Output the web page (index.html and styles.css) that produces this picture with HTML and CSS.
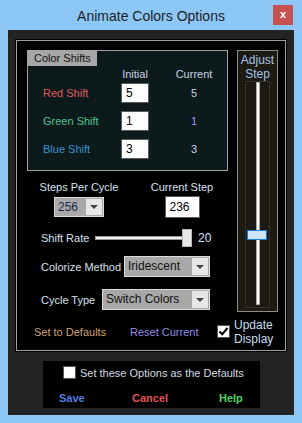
FILE: index.html
```html
<!DOCTYPE html>
<html lang="en">
<head>
    <meta charset="UTF-8">
    <meta name="viewport" content="width=device-width, initial-scale=1.0">
    <title>Animate Colors Options</title>
    <link rel="stylesheet" href="styles.css">
</head>
<body>
    <div class="window">
        <div class="titlebar">
            <span></span>
            <span class="title">Animate Colors Options</span>
            <span class="close">x</span>
        </div>
        <div class="client">
            <div class="main">
                <div class="main-inner">
                    <div class="top">
                        <div class="left">
                            <div class="shifts">
                                <div class="shifts-label">Color Shifts</div>
                                <div class="shifts-grid">
                                    <span></span>
                                    <span class="hdr">Initial</span>
                                    <span class="hdr">Current</span>

                                    <span class="name red">Red Shift</span>
                                    <span class="num-input">5</span>
                                    <span class="cur">5</span>

                                    <span class="name green">Green Shift</span>
                                    <span class="num-input">1</span>
                                    <span class="cur purple">1</span>

                                    <span class="name blue">Blue Shift</span>
                                    <span class="num-input">3</span>
                                    <span class="cur">3</span>
                                </div>
                            </div>

                            <div class="steps">
                                <div class="steps-col col-a">
                                    <div class="lbl">Steps Per Cycle</div>
                                    <div class="select select-steps">
                                        <span class="select-text">256</span>
                                        <span class="select-btn"><span class="arrow"></span></span>
                                    </div>
                                </div>
                                <div class="steps-col col-b">
                                    <div class="lbl">Current Step</div>
                                    <div class="step-input">236</div>
                                </div>
                            </div>

                            <div class="row rate-row">
                                <span class="lbl rate-lbl">Shift Rate</span>
                                <div class="hslider">
                                    <div class="htrack"></div>
                                    <div class="hthumb"></div>
                                </div>
                                <span class="rate-val">20</span>
                            </div>

                            <div class="row method-row">
                                <span class="lbl method-lbl">Colorize Method</span>
                                <div class="select select-method">
                                    <span class="select-text">Iridescent</span>
                                    <span class="select-btn"><span class="arrow"></span></span>
                                </div>
                            </div>

                            <div class="row cycle-row">
                                <span class="lbl cycle-lbl">Cycle Type</span>
                                <div class="select select-cycle">
                                    <span class="select-text">Switch Colors</span>
                                    <span class="select-btn"><span class="arrow"></span></span>
                                </div>
                            </div>
                        </div>

                        <div class="adjust">
                            <div class="adjust-title">Adjust<br>Step</div>
                            <div class="vframe">
                                <div class="vtrack"></div>
                                <div class="vthumb"></div>
                            </div>
                        </div>
                    </div>

                    <div class="actions">
                        <span class="link defaults">Set to Defaults</span>
                        <span class="link reset">Reset Current</span>
                        <span class="check checked">
                            <svg width="11" height="11" viewBox="0 0 11 11"><path d="M1.5 5.5 L4.2 8.3 L9.5 2" fill="none" stroke="#000" stroke-width="2"/></svg>
                        </span>
                        <span class="update">Update<br>Display</span>
                    </div>
                </div>
            </div>

            <div class="footer-box">
                <div class="default-row">
                    <span class="check"></span>
                    <span class="default-text">Set these Options as the Defaults</span>
                </div>
                <div class="buttons">
                    <span class="btn save">Save</span>
                    <span class="btn cancel">Cancel</span>
                    <span class="btn help">Help</span>
                </div>
            </div>
        </div>
    </div>
</body>
</html>
```

FILE: styles.css
```css
body {
    margin: 0;
    padding: 0;
    font-family: "Liberation Sans", Arial, sans-serif;
    font-size: 11px;
    background-color: #8cc7f6;
}
.window {
    width: 302px;
    height: 423px;
    background-color: #8cc7f6;
    overflow: hidden;
}
.titlebar {
    height: 30px;
    display: grid;
    grid-template-columns: 1fr auto 1fr;
    align-items: center;
}
.title {
    font-size: 14px;
    color: #1e1e1e;
    padding-top: 1px;
}
.close {
    justify-self: end;
    margin-right: 9px;
    width: 20px;
    height: 20px;
    background-color: #c75050;
    color: white;
    font-weight: bold;
    font-size: 11px;
    line-height: 18px;
    text-align: center;
}
.client {
    margin: 0 8px;
    height: 385px;
    background-color: #232323;
    padding: 9px 0 0 7px;
    box-sizing: border-box;
}
.main {
    width: 272px;
    height: 313px;
    background-color: #000;
    padding: 1px;
    box-sizing: border-box;
}
.main-inner {
    height: 100%;
    border: 1px solid #a0a0a0;
    box-sizing: border-box;
}
.top {
    display: flex;
    padding: 9px 0 0 10px;
    gap: 9px;
}
.left {
    width: 201px;
}

/* color shifts panel */
.shifts {
    height: 121px;
    box-sizing: border-box;
    border: 1px solid #a0a0a0;
    background-color: #0c1a1c;
}
.shifts-label {
    margin: -1px 0 0 -1px;
    width: 70px;
    height: 16px;
    line-height: 16px;
    box-sizing: border-box;
    padding-left: 7px;
    background-color: #a6a6a6;
    color: #111;
}
.shifts-grid {
    display: grid;
    grid-template-columns: 63px 28px 60px;
    grid-template-rows: 16px 28px 28px 28px;
    column-gap: 15px;
    padding-left: 15px;
}
.hdr {
    line-height: 16px;
    text-align: center;
    color: #c8d4e4;
}
.name, .cur {
    margin-top: 1px;
    height: 20px;
    line-height: 20px;
}
.cur {
    text-align: center;
    color: #c8d4ee;
}
.red { color: #e05c5c; }
.green { color: #52c48e; }
.blue { color: #3a95d2; }
.purple { color: #a898e8; }
.num-input {
    margin-top: 1px;
    height: 20px;
    line-height: 18px;
    box-sizing: border-box;
    border: 1px solid #5a5a5a;
    background-color: #fff;
    color: #000;
    font-size: 12px;
    padding-left: 4px;
}

/* steps per cycle */
.steps {
    display: flex;
    gap: 15px;
    padding-left: 4px;
    margin-top: 9px;
}
.steps-col {
    display: flex;
    flex-direction: column;
    align-items: center;
}
.col-a { width: 96px; }
.col-b { width: 80px; }
.lbl {
    color: #d6e2f0;
    line-height: 14px;
    white-space: nowrap;
}
.select {
    display: flex;
    align-items: stretch;
    height: 21px;
    box-sizing: border-box;
    border: 1px solid #dadada;
    background-color: #a8a8a8;
    padding: 1px;
}
.select-text {
    flex: 1;
    color: #111;
    font-size: 12px;
    line-height: 17px;
    padding-left: 2px;
    white-space: nowrap;
    overflow: hidden;
}
.select-btn {
    width: 16px;
    background-color: #e6e6e6;
    display: flex;
    align-items: center;
    justify-content: center;
}
.arrow {
    width: 0;
    height: 0;
    border-left: 4px solid transparent;
    border-right: 4px solid transparent;
    border-top: 4px solid #444;
}
.select-steps {
    width: 50px;
    height: 20px;
    margin-top: 3px;
}
.select-steps .select-text {
    line-height: 16px;
    color: #1a2a4a;
}
.step-input {
    margin-top: 2px;
    width: 35px;
    height: 22px;
    box-sizing: border-box;
    border: 1px solid #5a5a5a;
    background-color: #fff;
    color: #000;
    font-size: 12px;
    line-height: 20px;
    padding-left: 4px;
}

/* rows */
.row {
    display: flex;
    align-items: center;
    padding-left: 14px;
}
.rate-row {
    height: 18px;
    margin-top: 11px;
}
.rate-lbl { width: 54px; }
.hslider {
    position: relative;
    width: 97px;
    height: 18px;
    display: flex;
    align-items: center;
}
.htrack {
    width: 92px;
    height: 4px;
    box-sizing: border-box;
    border: 1px solid #9a9a9a;
    background-color: #f0f0f0;
}
.hthumb {
    position: absolute;
    right: 0;
    top: 0;
    width: 10px;
    height: 18px;
    box-sizing: border-box;
    border: 1px solid #b8b8b8;
    background-color: #e8e8e8;
}
.rate-val {
    margin-left: 6px;
    color: #d6e6f8;
    font-size: 12px;
}
.method-row {
    margin-top: 9px;
    height: 21px;
}
.method-lbl { width: 83px; }
.select-method { width: 86px; }
.cycle-row {
    margin-top: 12px;
    height: 21px;
}
.cycle-lbl { width: 61px; }
.select-cycle { width: 108px; }

/* adjust step panel */
.adjust {
    width: 41px;
    height: 262px;
    box-sizing: border-box;
    border: 1px solid #8e8c84;
    background-color: #1c1a12;
    padding-top: 2px;
}
.adjust-title {
    text-align: center;
    color: #a2c4e8;
    line-height: 14px;
    font-size: 12px;
}
.vframe {
    position: relative;
    width: 25px;
    height: 227px;
    margin: 0 auto;
    box-sizing: border-box;
    border: 1px dotted #4a4a44;
    display: flex;
    justify-content: center;
}
.vtrack {
    width: 4px;
    height: 223px;
    box-sizing: border-box;
    border: 1px solid #a8a8a8;
    background-color: #fafafa;
}
.vthumb {
    position: absolute;
    top: 148px;
    left: 1px;
    width: 20px;
    height: 10px;
    box-sizing: border-box;
    border: 1px solid #1a7ad4;
    background-color: #cde4f7;
}

/* bottom actions */
.actions {
    display: flex;
    align-items: center;
    height: 29px;
    margin-top: 5px;
    padding-left: 17px;
}
.link {
    white-space: nowrap;
}
.defaults {
    width: 96px;
    color: #d0a070;
}
.reset {
    width: 87px;
    color: #8e8ee6;
}
.check {
    width: 13px;
    height: 13px;
    box-sizing: border-box;
    border: 1px solid #555;
    background-color: #fff;
    display: flex;
    align-items: center;
    justify-content: center;
}
.checked {
    margin-right: 4px;
}
.update {
    color: #c4dcf4;
    line-height: 14px;
    font-size: 12px;
}

/* footer box */
.footer-box {
    width: 217px;
    height: 47px;
    margin: 9px 0 0 28px;
    background-color: #000;
    padding: 5px 0 0 20px;
    box-sizing: border-box;
}
.default-row {
    display: flex;
    align-items: center;
    gap: 4px;
}
.default-text {
    color: #d4dae2;
}
.buttons {
    display: flex;
    margin: 12px 0 0 -4px;
    line-height: 14px;
    font-weight: bold;
    font-size: 11px;
}
.btn { white-space: nowrap; }
.save { width: 73px; color: #4f7fe0; }
.cancel { width: 87px; color: #e05252; }
.help { color: #52d462; }
```
